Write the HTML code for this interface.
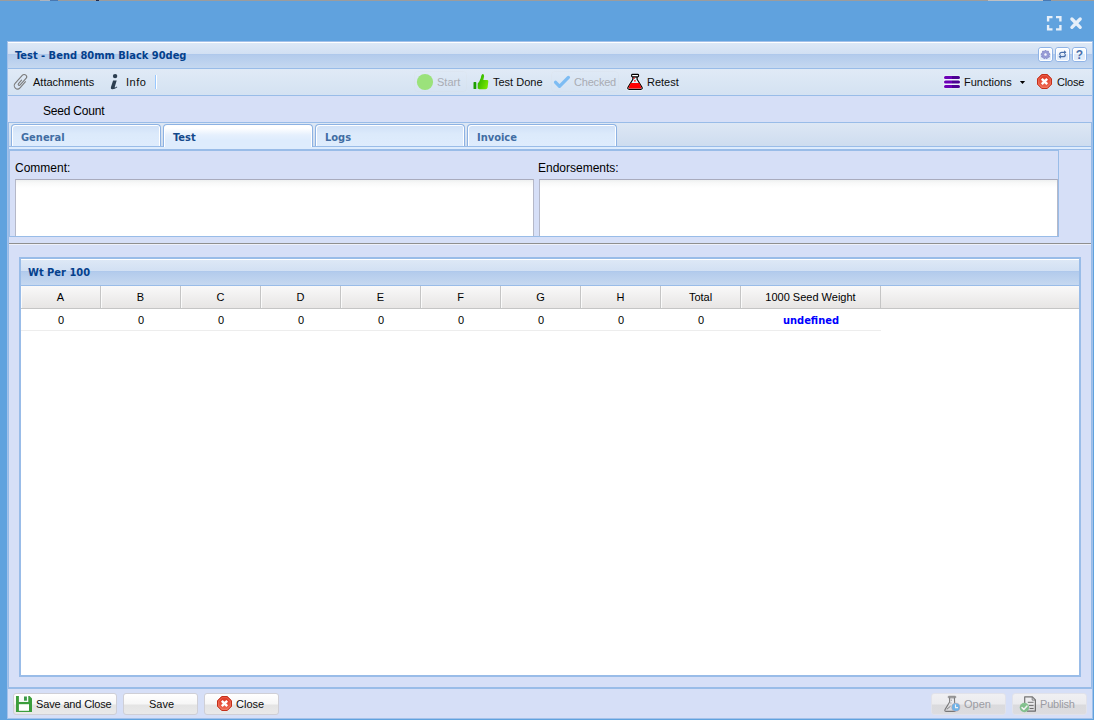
<!DOCTYPE html>
<html lang="en">
<head>
<meta charset="utf-8">
<title>Test - Bend 80mm Black 90deg</title>
<style>
html,body{margin:0;padding:0;}
body{width:1094px;height:720px;overflow:hidden;position:relative;background:#60a2de;font-family:"Liberation Sans",sans-serif;font-size:11px;color:#000;}
*{box-sizing:border-box;}
.abs{position:absolute;}
.t{position:absolute;white-space:nowrap;line-height:14px;font-size:11px;color:#0d0d0d;}
.b{font-family:"DejaVu Sans Condensed","Liberation Sans",sans-serif;font-weight:bold;}
.dis{color:#a9acb3;}
.hdr{background:linear-gradient(to bottom,#ffffff 0,#ffffff 1px,#dde8f6 1px,#d2e0f3 12px,#abc6eb 12px,#b3cbec 13px,#c5d8f0 26px);}
.btn{position:absolute;height:22px;border:1px solid #cfcfd6;border-radius:3px;background:linear-gradient(to bottom,#ffffff 0,#f6f6f6 10px,#e4e4e4 11px,#e9e9e9 100%);}
.btn.off{border-color:#e1e2ea;background:linear-gradient(to bottom,#f0f0f3 0,#ebebee 10px,#dadadd 11px,#dcdcdf 100%);}
.tab{position:absolute;top:124px;width:150px;height:22px;border:1px solid #8db2e3;border-bottom:none;border-radius:4px 4px 0 0;background:linear-gradient(to bottom,#cfe0f7 0,#dceafb 9px,#deecfd 100%);box-shadow:inset 1px 1px 0 #fff,inset -1px 0 0 #fff;}
.tab.act{height:23px;background:linear-gradient(to bottom,#ffffff 0,#ffffff 3px,#e6f0fd 10px,#deecfd 15px,#deecfd 100%);}
.tab span{position:absolute;left:9px;top:6px;line-height:14px;font-size:11px;color:#416da3;}
.tab.act span{color:#15498b;}
.ta{position:absolute;top:179px;height:58px;width:519px;border:1px solid #b5b8c8;border-top-color:#a9abbd;background:linear-gradient(to bottom,#eef0f0 0,#f8f9f9 3px,#ffffff 8px,#ffffff 100%);}
.col{position:absolute;top:0;height:22px;width:80px;border-right:1px solid #c5c5c5;box-shadow:inset 1px 0 0 #fbfbfb;text-align:center;line-height:14px;padding-top:4px;font-size:11px;color:#000;}
.cell{position:absolute;top:0;height:21px;width:80px;text-align:center;line-height:14px;padding-top:4px;font-size:11px;color:#000;}
svg{position:absolute;overflow:visible;}
</style>
</head>
<body>
<!-- top hairline -->
<div class="abs" style="left:0;top:0;width:1094px;height:1px;background:#9c9c9c"></div>
<div class="abs" style="left:40px;top:0;width:10px;height:1px;background:#aeb4bd"></div>
<div class="abs" style="left:50px;top:0;width:8px;height:1px;background:#4a78b0"></div>
<div class="abs" style="left:96px;top:0;width:3px;height:1px;background:#232a4a"></div>
<div class="abs" style="left:988px;top:0;width:55px;height:1px;background:#bfc0c2"></div>
<div class="abs" style="left:1043px;top:0;width:8px;height:1px;background:#4a78b0"></div>

<!-- window frame -->
<div class="abs" id="win" style="left:7px;top:41px;width:1086px;height:678px;border:1px solid #a3c1ea;background:#d6dff7"></div>

<!-- window header -->
<div class="abs hdr" style="left:8px;top:42px;width:1084px;height:26px"></div>
<div class="abs" style="left:8px;top:68px;width:1084px;height:1px;background:#99bce8"></div>
<div class="t b" style="left:15px;top:49px;color:#04408c">Test - Bend 80mm Black 90deg</div>

<!-- top toolbar -->
<div class="abs" style="left:8px;top:69px;width:1084px;height:26px;background:linear-gradient(to bottom,#e0eaf6,#d4e2f2)"></div>
<div class="abs" style="left:8px;top:95px;width:1084px;height:1px;background:#99bce8"></div>
<div class="t" style="left:33px;top:75px">Attachments</div>
<div class="t" style="left:126px;top:75px;letter-spacing:0.5px">Info</div>
<div class="abs" style="left:155px;top:75px;width:2px;height:14px;border-left:1px solid #98c8ff;border-right:1px solid #fff"></div>
<div class="t dis" style="left:437px;top:75px">Start</div>
<div class="t" style="left:493px;top:75px">Test Done</div>
<div class="t dis" style="left:574px;top:75px;letter-spacing:-0.2px">Checked</div>
<div class="t" style="left:647px;top:75px">Retest</div>
<div class="t" style="left:964px;top:75px">Functions</div>
<div class="t" style="left:1057px;top:75px;letter-spacing:-0.2px">Close</div>

<!-- label row -->
<div class="t" style="left:43px;top:104px;font-size:12px;line-height:15px;letter-spacing:-0.2px;color:#000">Seed Count</div>

<!-- tab bar -->
<div class="abs" style="left:8px;top:96px;width:1px;height:26px;background:#dfe5f9"></div>
<div class="abs" style="left:8px;top:122px;width:1084px;height:1px;background:#99bce8"></div>
<div class="abs" style="left:8px;top:123px;width:1084px;height:24px;border-left:1px solid #99bce8;border-right:1px solid #99bce8;background:linear-gradient(to bottom,#dde7f4,#cddcef)"></div>
<div class="abs" style="left:8px;top:146px;width:1084px;height:4px;border:1px solid #99bce8;background:#deecfd"></div>
<div class="tab" style="left:11px"><span class="b">General</span></div>
<div class="tab act" style="left:163px"><span class="b">Test</span></div>
<div class="tab" style="left:315px"><span class="b">Logs</span></div>
<div class="tab" style="left:467px"><span class="b">Invoice</span></div>

<!-- tab panel body borders -->
<div class="abs" style="left:8px;top:150px;width:1px;height:538px;background:#99bce8"></div>
<div class="abs" style="left:1091px;top:150px;width:1px;height:538px;background:#99bce8"></div>
<div class="abs" style="left:8px;top:687px;width:1084px;height:2px;background:#99bce8"></div>

<!-- form panel -->
<div class="abs" style="left:9px;top:150px;width:1050px;height:87px;border:1px solid #99bce8"></div>
<div class="t" style="left:15px;top:161px;font-size:12px;line-height:15px;color:#000">Comment:</div>
<div class="t" style="left:538px;top:161px;font-size:12px;line-height:15px;color:#000">Endorsements:</div>
<div class="ta" style="left:15px"></div>
<div class="ta" style="left:539px"></div>
<div class="abs" style="left:10px;top:236px;width:1048px;height:1px;background:#99bce8"></div>

<!-- hr -->
<div class="abs" style="left:9px;top:243px;width:1082px;height:2px;border-top:1px solid #8f8f8f;border-bottom:1px solid #eef0fa"></div>

<!-- grid panel -->
<div class="abs" style="left:19px;top:257px;width:1062px;height:420px;border:2px solid #99bce8;background:#fff"></div>
<div class="abs hdr" style="left:21px;top:259px;width:1058px;height:26px"></div>
<div class="abs" style="left:21px;top:285px;width:1058px;height:1px;background:#99bce8"></div>
<div class="t b" style="left:28px;top:266px;color:#04408c">Wt Per 100</div>
<div class="abs" id="ghdr" style="left:21px;top:286px;width:1058px;height:23px;border-bottom:1px solid #c5c5c5;background:linear-gradient(to bottom,#f9f9f9,#e7e5e4)">
  <div class="col" style="left:0">A</div>
  <div class="col" style="left:80px">B</div>
  <div class="col" style="left:160px">C</div>
  <div class="col" style="left:240px">D</div>
  <div class="col" style="left:320px">E</div>
  <div class="col" style="left:400px">F</div>
  <div class="col" style="left:480px">G</div>
  <div class="col" style="left:560px">H</div>
  <div class="col" style="left:640px">Total</div>
  <div class="col" style="left:720px;width:140px">1000 Seed Weight</div>
</div>
<div class="abs" id="grow" style="left:21px;top:309px;width:860px;height:22px;border-bottom:1px solid #ededed">
  <div class="cell" style="left:0">0</div>
  <div class="cell" style="left:80px">0</div>
  <div class="cell" style="left:160px">0</div>
  <div class="cell" style="left:240px">0</div>
  <div class="cell" style="left:320px">0</div>
  <div class="cell" style="left:400px">0</div>
  <div class="cell" style="left:480px">0</div>
  <div class="cell" style="left:560px">0</div>
  <div class="cell" style="left:640px">0</div>
  <div class="cell b" style="left:720px;width:140px;padding-top:5px;color:#0000ff">undefined</div>
</div>

<!-- bottom toolbar -->
<div class="btn" style="left:13px;top:693px;width:104px"></div>
<div class="t" style="left:36px;top:697px;letter-spacing:-0.15px">Save and Close</div>
<div class="btn" style="left:123px;top:693px;width:75px"></div>
<div class="t" style="left:149px;top:697px">Save</div>
<div class="btn" style="left:204px;top:693px;width:75px"></div>
<div class="t" style="left:236px;top:697px">Close</div>
<div class="btn off" style="left:931px;top:693px;width:75px"></div>
<div class="t dis" style="left:964px;top:697px;color:#9b9ca3">Open</div>
<div class="btn off" style="left:1012px;top:693px;width:75px"></div>
<div class="t dis" style="left:1040px;top:697px;letter-spacing:-0.2px;color:#9b9ca3">Publish</div>

<svg width="1094" height="720" viewBox="0 0 1094 720" style="left:0;top:0">
<defs>
<linearGradient id="gThumb" x1="0" y1="0" x2="1" y2="0.6"><stop offset="0" stop-color="#1fa800"/><stop offset="1" stop-color="#76e600"/></linearGradient>
<linearGradient id="gStop" x1="0" y1="0" x2="0" y2="1"><stop offset="0" stop-color="#dd3320"/><stop offset="1" stop-color="#ef6c55"/></linearGradient>
<linearGradient id="gTool" x1="0" y1="0" x2="0" y2="1"><stop offset="0" stop-color="#ffffff"/><stop offset="0.5" stop-color="#f1f6fd"/><stop offset="0.5" stop-color="#dce8f9"/><stop offset="1" stop-color="#e4eefb"/></linearGradient>
<g id="stop">
<polygon points="4.7,0.5 10.3,0.5 14.5,4.7 14.5,10.3 10.3,14.5 4.7,14.5 0.5,10.3 0.5,4.7" fill="url(#gStop)" stroke="#c3301a" stroke-width="1" stroke-linejoin="round"/>
<polygon points="5.1,1.7 9.9,1.7 13.3,5.1 13.3,9.9 9.9,13.3 5.1,13.3 1.7,9.9 1.7,5.1" fill="none" stroke="#f8a08c" stroke-width="0.7" opacity="0.55"/>
<path d="M4.8 4.8 L10.2 10.2 M10.2 4.8 L4.8 10.2" stroke="#fff" stroke-width="2.4" stroke-linecap="butt"/>
</g>
<g id="tool"><rect x="0.5" y="0.5" width="14" height="14" rx="2.5" fill="url(#gTool)" stroke="#8fb3e6"/><rect x="1.5" y="1.5" width="12" height="12" rx="1.5" fill="none" stroke="#fff"/></g>
</defs>

<!-- window controls in blue band -->
<g fill="none" stroke="#e6eff9" stroke-width="2.4">
<path d="M1048.1 21.5 V17.1 H1052.5 M1056 17.1 H1060.4 V21.5 M1060.4 25 V29.4 H1056 M1052.5 29.4 H1048.1 V25"/>
</g>
<path d="M1071.9 19 L1080.2 27.3 M1080.2 19 L1071.9 27.3" stroke="#e6eff9" stroke-width="3.3" stroke-linecap="round"/>

<!-- header tools -->
<use href="#tool" x="1038" y="47"/><use href="#tool" x="1055" y="47"/><use href="#tool" x="1072" y="47"/>
<g transform="translate(1045.5 54.5)">
<path d="M0 -4.5 L1.2 -3.2 L2.9 -3.5 L3.2 -1.8 L4.5 -0.6 L3.6 0.9 L4 2.5 L2.4 2.9 L1.5 4.3 L0 3.6 L-1.5 4.3 L-2.4 2.9 L-4 2.5 L-3.6 0.9 L-4.5 -0.6 L-3.2 -1.8 L-2.9 -3.5 L-1.2 -3.2 Z" fill="#979cd6" stroke="#757bbd" stroke-width="0.6"/>
<circle r="1.5" fill="#f4f6fd" stroke="#8a90cc" stroke-width="0.4"/>
</g>
<g fill="none" stroke="#4a70ab" stroke-width="1.25" stroke-linecap="round" stroke-linejoin="round">
<path d="M1059.7 54.3 Q1059.7 52.3 1061.8 52.3 H1064.6"/>
<path d="M1065.3 54.7 Q1065.3 56.7 1063.2 56.7 H1060.4"/>
</g>
<path d="M1064.1 50.2 L1066.4 52.3 L1064.1 54.4 Z M1060.9 54.6 L1058.6 56.7 L1060.9 58.8 Z" fill="#4a70ab"/>
<text x="1079.5" y="58.7" text-anchor="middle" font-family="Liberation Sans, sans-serif" font-weight="bold" font-size="12" fill="#4a70ab">?</text>

<!-- paperclip -->
<g transform="translate(20.9 81.9) rotate(-48)" fill="none" stroke="#7b7b7b" stroke-width="1.1" stroke-linecap="round">
<path d="M3.2 3.3 L-5 3.3 A3.3 3.3 0 0 1 -5 -3.3 L6 -3.3 A2.4 2.4 0 0 1 6 1.5 L-2.8 1.5 A1.1 1.1 0 0 1 -2.8 -0.7 L1.8 -0.7"/>
</g>
<!-- info i -->
<circle cx="115.1" cy="76.1" r="2.2" fill="#2c3e50"/>
<path d="M113.1 80.4 L116.7 80.4 L114.7 86.9 Q114.6 87.6 115.3 87.4 L116.9 86.6 L117.3 87.3 Q114.6 89.5 112.1 89.3 Q110.4 89 110.9 87.2 Z" fill="#2c3e50"/>

<!-- start (disabled) -->
<rect x="414.5" y="71.5" width="52" height="20" rx="3" fill="none" stroke="#d8d2d8" stroke-width="1" opacity="0.12"/>
<circle cx="425" cy="82" r="8.1" fill="#9be27b"/>
<!-- thumbs up -->
<rect x="473.5" y="82.1" width="2.8" height="7" rx="0.6" fill="#1c9f00"/>
<path d="M477.7 83.4 L479.3 81.6 L480.8 78 Q481.4 74.2 482.9 74 Q484.3 74.2 484.1 76.4 L483.3 80 L487.3 80 Q488.5 80.2 488.3 81.5 L487.6 87.6 Q487.2 89.2 485.5 89.2 L479.3 89.2 L477.7 88.4 Z" fill="url(#gThumb)"/>
<!-- checked (disabled) -->
<rect x="551.5" y="71.5" width="67" height="20" rx="3" fill="none" stroke="#d8d2d8" stroke-width="1" opacity="0.12"/>
<path d="M555.6 82.3 L559.5 86.3 L568.4 77.4" fill="none" stroke="#7dbcf3" stroke-width="3.3" stroke-linecap="round" stroke-linejoin="round"/>
<!-- retest flask -->
<g>
<path d="M632.9 76.6 L632.9 79.2 L628 87.2 Q627.2 89.3 629.2 89.3 L640.8 89.3 Q642.8 89.3 642 87.2 L637.1 79.2 L637.1 76.6 Z" fill="#eef7fa" stroke="#fff" stroke-width="2.8" opacity="0.6"/>
<path d="M632.9 76.6 L632.9 79.2 L628 87.2 Q627.2 89.3 629.2 89.3 L640.8 89.3 Q642.8 89.3 642 87.2 L637.1 79.2 L637.1 76.6 Z" fill="#e6f5fa" stroke="#000" stroke-width="1.2" stroke-linejoin="round"/>
<path d="M630.8 83 L639.2 83 L641.2 87.3 Q641.5 88.5 640.5 88.5 L629.5 88.5 Q628.5 88.5 628.8 87.3 Z" fill="#ff0000"/>
<rect x="631.6" y="74.4" width="7" height="2.5" rx="0.9" fill="#fff" stroke="#000" stroke-width="1.1"/>
<rect x="633.3" y="77.5" width="1.5" height="1.4" fill="#ff1a1a"/><rect x="634.1" y="80.1" width="1.6" height="1.5" fill="#ff1a1a"/>
</g>
<!-- functions -->
<rect x="943.6" y="75.5" width="16.8" height="12.9" fill="#fff" opacity="0.5"/>
<linearGradient id="gBar" gradientUnits="userSpaceOnUse" x1="944" y1="0" x2="960" y2="0"><stop offset="0.5" stop-color="#6b00b6"/><stop offset="0.5" stop-color="#4b0092"/></linearGradient>
<g stroke="url(#gBar)" stroke-width="3" stroke-linecap="round" fill="none">
<path d="M945.5 77.4 H958.5"/><path d="M945.5 82 H958.5"/><path d="M945.5 86.5 H958.5"/>
</g>
<polygon points="1019.9,81 1025.1,81 1022.5,84.1" fill="#000"/>
<use href="#stop" x="1037" y="74"/>
<!-- save icon -->
<path d="M16 696 H18.9 V702 H28.3 V696 H29.6 L32 698.4 V712 H16 Z" fill="#3c9e3c"/>
<rect x="24" y="696.5" width="2.9" height="4.2" fill="#3a9a48"/>
<rect x="18.9" y="704.2" width="10.1" height="6.6" fill="#fff"/>
<!-- close (bottom) -->
<use href="#stop" x="217" y="696"/>
<!-- open: flask + clock (disabled) -->
<g opacity="0.62">
<path d="M949.6 697.6 L949.6 702 L945 709.6 Q944.3 711.4 946.2 711.4 L955 711.4 L954.4 697.6" fill="none" stroke="#3a3a3a" stroke-width="1.1" stroke-linejoin="round"/>
<rect x="948.2" y="696.3" width="7.6" height="1.5" rx="0.6" fill="none" stroke="#3a3a3a" stroke-width="1"/>
<path d="M946.8 709.3 L950.5 706.2 M950.8 700.2 h1 M950.4 703 h1" stroke="#3a3a3a" stroke-width="0.9" fill="none"/>
<circle cx="955.8" cy="707.2" r="4.1" fill="#2f9bee" stroke="#d07a6a" stroke-width="0.4"/>
<path d="M955.5 704.6 V707.6 H958" fill="none" stroke="#fff" stroke-width="1.1"/>
</g>
<!-- publish: document + check (disabled) -->
<g opacity="0.62">
<path d="M1024.7 706 V696.9 H1032.4 L1035.4 699.9 V711.1 H1027" fill="none" stroke="#2a2a2a" stroke-width="1.2" stroke-linejoin="round"/>
<path d="M1032.2 697 V700.1 H1035.3" fill="none" stroke="#2a2a2a" stroke-width="0.9"/>
<path d="M1027.8 702.3 H1033.6 M1029 705.4 H1033.6 M1029.6 708.5 H1033.6" stroke="#2a2a2a" stroke-width="1" fill="none"/>
<circle cx="1024.4" cy="707.5" r="4.7" fill="#4caf5c"/>
<path d="M1022 707.6 L1023.8 709.4 L1027 706" fill="none" stroke="#fff" stroke-width="1.5" stroke-linecap="round" stroke-linejoin="round"/>
</g>

</svg>

</body>
</html>
